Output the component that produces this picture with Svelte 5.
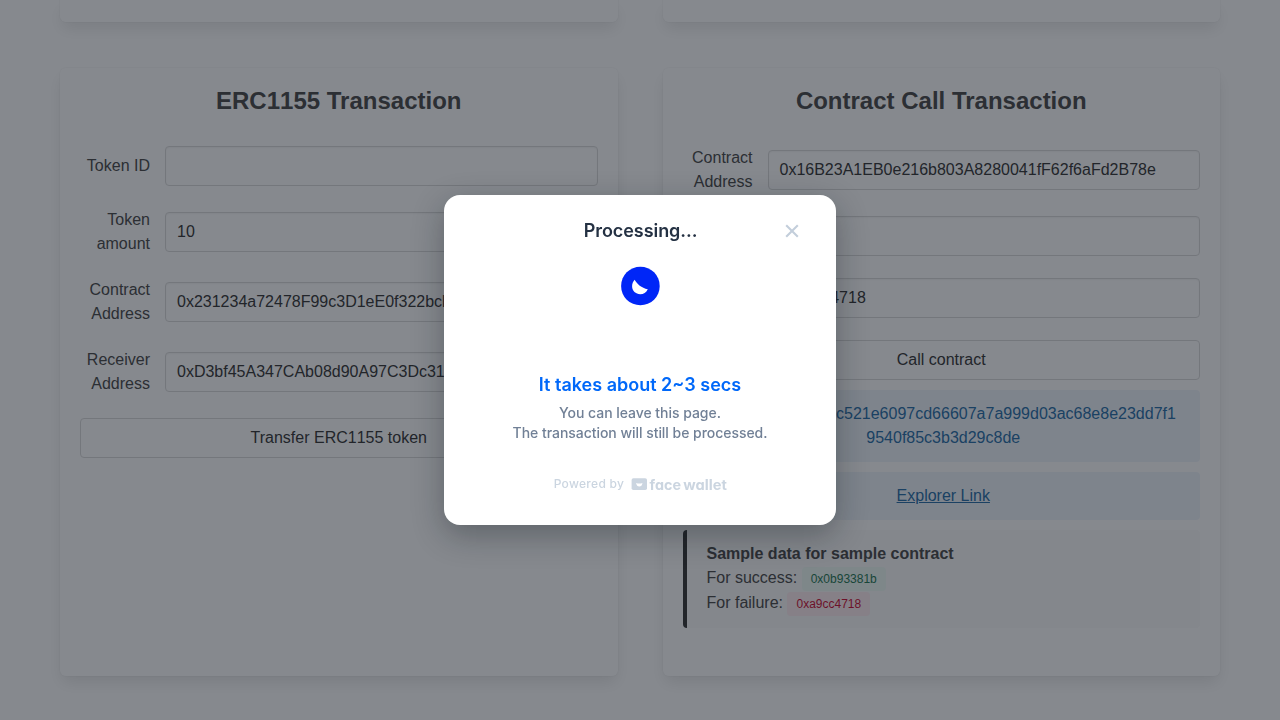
<script>
  const tokenFields = [
    { label: 'Token ID', value: '' },
    { label: 'Token amount', value: '10' },
    { label: 'Contract Address', value: '0x231234a72478F99c3D1eE0f322bcb' },
    { label: 'Receiver Address', value: '0xD3bf45A347CAb08d90A97C3Dc31' },
  ];
  const callFields = [
    { label: 'Contract Address', value: '0x16B23A1EB0e216b803A8280041fF62f6aFd2B78e' },
    { label: 'Amount', value: '' },
    { label: 'Data', value: '0xa9cc4718' },
  ];
</script>

{#snippet field(f)}
  <div class="field">
    <div class="label">{f.label}</div>
    <div class="input">{f.value}</div>
  </div>
{/snippet}

<main class="page">
  <div class="cards">
    <section class="box tail"></section>
    <section class="box tail"></section>
    <section class="box">
      <h2>ERC<span class="digits">1155</span> Transaction</h2>
      <div class="form">
        {#each tokenFields as f}{@render field(f)}{/each}
        <button class="action">Transfer ERC<span class="digits">1155</span> token</button>
      </div>
    </section>
    <section class="box">
      <h2>Contract Call Transaction</h2>
      <div class="form">
        {#each callFields as f}{@render field(f)}{/each}
        <button class="action">Call contract</button>
      </div>
      <div class="notice">Hash: 0x4d1e8b2c521e6097cd66607a7a999d03ac68e8e23dd7f1<br />9540f85c3b3d29c8de</div>
      <div class="notice"><span class="link">Explorer Link</span></div>
      <div class="sample">
        <strong>Sample data for sample contract</strong>
        <div class="line">For success: <span class="tag ok">0x0b93381b</span></div>
        <div class="line">For failure: <span class="tag bad">0xa9cc4718</span></div>
      </div>
    </section>
  </div>
</main>

<div class="overlay">
  <div class="modal">
    <header>
      <h3>Processing...</h3>
      <svg class="close" width="24" height="24" viewBox="0 0 24 24" fill="none" stroke="#c3cedb" stroke-width="2.1" stroke-linecap="butt">
        <path d="M6.2 6.2 17.8 17.8M17.8 6.2 6.2 17.8" />
      </svg>
    </header>
    <svg class="spinner" width="40" height="40" viewBox="0 0 40 40">
      <circle cx="20.4" cy="20" r="19.3" fill="#0026f7" />
      <path d="M14.6 13.7C17 18 21.5 21.9 27.8 23.2C26.2 26.4 23.6 28.2 20.2 28.2C15.7 28.2 12.1 24.8 12.1 20.3C12.1 17.8 13 15.4 14.6 13.7Z" fill="#fff" />
    </svg>
    <p class="eta">It takes about 2~3 secs</p>
    <p class="note">You can leave this page.<br />The transaction will still be processed.</p>
    <footer>
      <span>Powered by</span>
      <svg class="brand" width="97" height="20" viewBox="0 0 97 20" fill="#cbd5e0">
        <rect x="0.6" y="4.2" width="15.4" height="11.8" rx="1.8" />
        <path d="M5.1 9Q8.3 10.2 11.5 9Q10.9 12.5 8.3 12.5Q5.7 12.5 5.1 9Z" fill="#fff" />
        <text x="18.6" y="15.6" textLength="31.5" lengthAdjust="spacingAndGlyphs">face</text>
        <text x="52.3" y="15.6" textLength="43.5" lengthAdjust="spacingAndGlyphs">wallet</text>
      </svg>
    </footer>
  </div>
</div>

<style>
  :global(body) { margin: 0; overflow: hidden; background: #fff; }
  .page, .page * , .overlay, .overlay * { box-sizing: border-box; }
  .page {
    height: 720px;
    overflow: hidden;
    padding: 0 60px;
    font: 16px/24px "Liberation Sans", Arial, sans-serif;
    color: #4a4a4a;
  }
  .cards {
    display: grid;
    grid-template-columns: 1fr 1fr;
    grid-template-rows: 22px 608px;
    gap: 46px 45px;
  }
  .box {
    min-width: 0;
    padding: 20px;
    background: #fff;
    border-radius: 6px;
    box-shadow: 0 8px 16px -2px rgba(10, 10, 10, 0.1), 0 0 0 1px rgba(10, 10, 10, 0.02);
  }
  .tail { padding: 0; border-radius: 0 0 6px 6px; }
  h2 { margin: 0 0 33px; font-size: 24px; line-height: 25px; font-weight: 700; text-align: center; }
  .digits { font-kerning: none; }
  .form { display: flex; flex-direction: column; gap: 22px; }
  .field { display: flex; align-items: center; gap: 15px; }
  .label { width: 70px; flex: none; text-align: right; }
  .input {
    flex: 1;
    min-width: 0;
    height: 40px;
    padding: 7px 11px;
    overflow: hidden;
    white-space: nowrap;
    color: #363636;
    background: #fff;
    border: 1px solid #dbdbdb;
    border-radius: 4px;
    box-shadow: inset 0 1px 2px rgba(10, 10, 10, 0.05);
  }
  .action {
    height: 40px;
    padding: 0;
    font: inherit;
    color: #363636;
    background: #fff;
    border: 1px solid #dbdbdb;
    border-radius: 4px;
  }
  .notice {
    margin-top: 10px;
    padding: 12px 20px 12px 24px;
    text-align: center;
    white-space: nowrap;
    color: #296fa8;
    background: #eff5fb;
    border-radius: 4px;
  }
  .link { text-decoration: underline; }
  .sample {
    height: 98px;
    margin-top: 10px;
    padding: 12px 20px;
    background: #fafafa;
    border-left: 4px solid #363636;
    border-radius: 4px;
  }
  .sample strong { display: block; height: 24px; }
  .line { display: flex; align-items: flex-start; gap: 4.5px; height: 25px; line-height: 24px; }
  .tag { height: 24px; padding: 0 9px; margin-top: 1px; border-radius: 4px; font-size: 12px; line-height: 24px; }
  .ok { color: #257953; background: #effaf5; }
  .bad { color: #cc0f35; background: #feecf0; }

  .overlay {
    position: fixed;
    inset: 0;
    display: flex;
    align-items: center;
    justify-content: center;
    background: rgba(13, 20, 30, 0.5);
    font-family: Inter, sans-serif;
  }
  .modal {
    width: 392px;
    height: 330px;
    display: flex;
    flex-direction: column;
    align-items: center;
    padding: 24px 32px 0;
    background: #fff;
    border-radius: 16px;
    box-shadow: 0 10px 32px rgba(12, 20, 28, 0.33);
    text-align: center;
  }
  header { width: 100%; height: 24px; display: grid; grid-template-columns: 24px 1fr 24px; }
  h3 { grid-column: 2; margin: 0; padding-left: 1px; font-size: 18px; line-height: 24px; font-weight: 600; letter-spacing: -0.06px; color: #243143; }
  .spinner { margin-top: 23px; }
  .eta { margin: 67px 0 0; font-size: 18px; line-height: 24px; font-weight: 600; color: #0068f9; }
  .note { margin: 6px 0 0; font-size: 14px; line-height: 20px; font-weight: 450; letter-spacing: -0.04px; color: #718096; }
  footer { margin: 31px 0 0 2px; display: flex; align-items: center; gap: 7px; font-size: 12px; line-height: 20px; font-weight: 450; letter-spacing: 0.3px; color: #cbd5e0; }
  .brand text { font: 700 14px Inter, sans-serif; letter-spacing: 0; font-feature-settings: "cv11" 1; }
</style>
